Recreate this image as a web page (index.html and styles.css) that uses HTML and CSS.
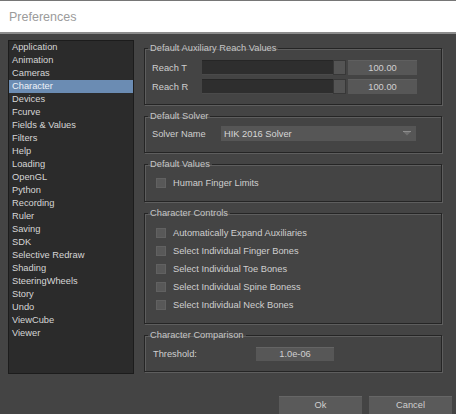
FILE: index.html
```html
<html>
<head>
  <meta charset="UTF-8" />
  <title>Preferences</title>
  <link rel="stylesheet" href="styles.css">
</head>
<body>

  <div class="titlebar"><span class="title">Preferences</span></div>

  <div class="main">
    <ul class="nav">
      <li>Application</li>
      <li>Animation</li>
      <li>Cameras</li>
      <li class="selected">Character</li>
      <li>Devices</li>
      <li>Fcurve</li>
      <li>Fields &amp; Values</li>
      <li>Filters</li>
      <li>Help</li>
      <li>Loading</li>
      <li>OpenGL</li>
      <li>Python</li>
      <li>Recording</li>
      <li>Ruler</li>
      <li>Saving</li>
      <li>SDK</li>
      <li>Selective Redraw</li>
      <li>Shading</li>
      <li>SteeringWheels</li>
      <li>Story</li>
      <li>Undo</li>
      <li>ViewCube</li>
      <li>Viewer</li>
    </ul>

    <div class="panels">
      <fieldset class="group reach">
        <legend>Default Auxiliary Reach Values</legend>
        <div class="row">
          <span class="label reach-label">Reach T</span>
          <div class="slider"><div class="track"></div><div class="handle"></div></div>
          <div class="field value">100.00</div>
        </div>
        <div class="row">
          <span class="label reach-label">Reach R</span>
          <div class="slider"><div class="track"></div><div class="handle"></div></div>
          <div class="field value">100.00</div>
        </div>
      </fieldset>

      <fieldset class="group solver">
        <legend>Default Solver</legend>
        <div class="row">
          <span class="label solver-label">Solver Name</span>
          <div class="select">
            <span>HIK 2016 Solver</span>
            <svg width="8" height="5" viewBox="0 0 8 5"><path d="M0 0.5 H8 L4 4.5 Z" fill="#6f6f6f"/><path d="M0 0.5 H8" stroke="#8e8e8e" stroke-width="1"/></svg>
          </div>
        </div>
      </fieldset>

      <fieldset class="group checks">
        <legend>Default Values</legend>
        <div class="check-row"><span class="check"></span>Human Finger Limits</div>
      </fieldset>

      <fieldset class="group checks controls">
        <legend>Character Controls</legend>
        <div class="check-list">
          <div class="check-row"><span class="check"></span>Automatically Expand Auxiliaries</div>
          <div class="check-row"><span class="check"></span>Select Individual Finger Bones</div>
          <div class="check-row"><span class="check"></span>Select Individual Toe Bones</div>
          <div class="check-row"><span class="check"></span>Select Individual Spine Boness</div>
          <div class="check-row"><span class="check"></span>Select Individual Neck Bones</div>
        </div>
      </fieldset>

      <fieldset class="group compare">
        <legend>Character Comparison</legend>
        <div class="row">
          <span class="label threshold-label">Threshold:</span>
          <div class="field threshold">1.0e-06</div>
        </div>
      </fieldset>
    </div>
  </div>

  <div class="footer">
    <button>Ok</button>
    <button>Cancel</button>
  </div>

</body>
</html>
```

FILE: styles.css
```css
body {
  margin: 0;
  height: 414px;
  overflow: hidden;
  background-color: #444444;
  font-family: "Liberation Sans", Arial, sans-serif;
  font-size: 9.3px;
  color: #cfcfcf;
}
.titlebar {
  height: 31px;
  background-color: #ffffff;
  border-top: 1px solid #767676;
  border-bottom: 2px solid #8c8c8c;
  display: flex;
  align-items: center;
  padding-left: 9px;
}
.title {
  font-size: 12.5px;
  color: #9b9b9b;
}
.main {
  display: flex;
  padding: 6px 0 0 8px;
}
.nav {
  list-style: none;
  margin: 0;
  padding: 0;
  width: 124px;
  height: 332px;
  background-color: #2b2b2b;
  border: 1px solid #1c1c1c;
}
.nav li {
  height: 13px;
  line-height: 13px;
  padding-left: 3px;
  color: #d6d6d6;
  white-space: nowrap;
}
.nav li.selected {
  background-color: #6b8cb3;
  color: #eef2f8;
}
.panels {
  margin: 3px 0 0 10px;
  width: 298px;
  display: flex;
  flex-direction: column;
  gap: 6px;
}
.group {
  margin: 0;
  min-width: 0;
  border: 1px solid #252525;
  box-shadow: 1px 1px 0 #5e5e5e, inset 1px 1px 0 #5e5e5e;
  padding: 6px 24px 10px 7px;
}
.group legend {
  line-height: 11px;
  padding: 0 2px;
  margin-left: -4px;
  color: #c6c6c6;
}
.group.solver {
  padding-top: 4px;
  padding-bottom: 11px;
}
.group.checks {
  padding-bottom: 11px;
}
.group.controls {
  padding-top: 7px;
}
.group.compare {
  padding-bottom: 10px;
}
.row {
  display: flex;
  align-items: center;
}
.reach .row + .row {
  margin-top: 4px;
}
.label {
  flex: none;
  color: #cfcfcf;
}
.reach-label { width: 50px; }
.solver-label { width: 69px; }
.threshold-label { width: 103px; margin-left: 1px; }
.slider {
  display: flex;
  width: 144px;
  height: 15px;
}
.track {
  flex: 1;
  background-color: #2e2e2e;
  border-top: 1px solid #262626;
  border-bottom: 1px solid #4a4a4a;
}
.handle {
  width: 11px;
  background-color: #545454;
  border: 1px solid #383838;
}
.field {
  height: 15px;
  line-height: 15px;
  text-align: center;
  background-color: #575757;
  border-top: 1px solid #5f5f5f;
  box-sizing: border-box;
  color: #d0d0d0;
}
.value {
  width: 69px;
  margin-left: 2px;
}
.threshold {
  width: 78px;
  height: 14px;
  line-height: 13px;
  border-top: 1px solid #646464;
}
.select {
  width: 195px;
  height: 15px;
  display: flex;
  align-items: center;
  justify-content: space-between;
  padding: 0 5px 0 3px;
  box-sizing: border-box;
  background-color: #565656;
  color: #d6d6d6;
}
.check-list {
  display: flex;
  flex-direction: column;
  gap: 4px;
}
.check-row {
  display: flex;
  align-items: center;
  gap: 7px;
  height: 14px;
  margin-left: 4px;
}
.check {
  width: 8px;
  height: 8px;
  background-color: #585858;
  border: 1px solid #616161;
}
.footer {
  display: flex;
  justify-content: flex-end;
  gap: 7px;
  padding: 22px 4px 0 0;
}
.footer button {
  width: 83px;
  height: 18px;
  padding: 1px 0 3px;
  line-height: 14px;
  border: none;
  border-top: 1px solid #666666;
  background-color: #5a5a5a;
  color: #cfcfcf;
  font-family: "Liberation Sans", Arial, sans-serif;
  font-size: 9.3px;
}
```
